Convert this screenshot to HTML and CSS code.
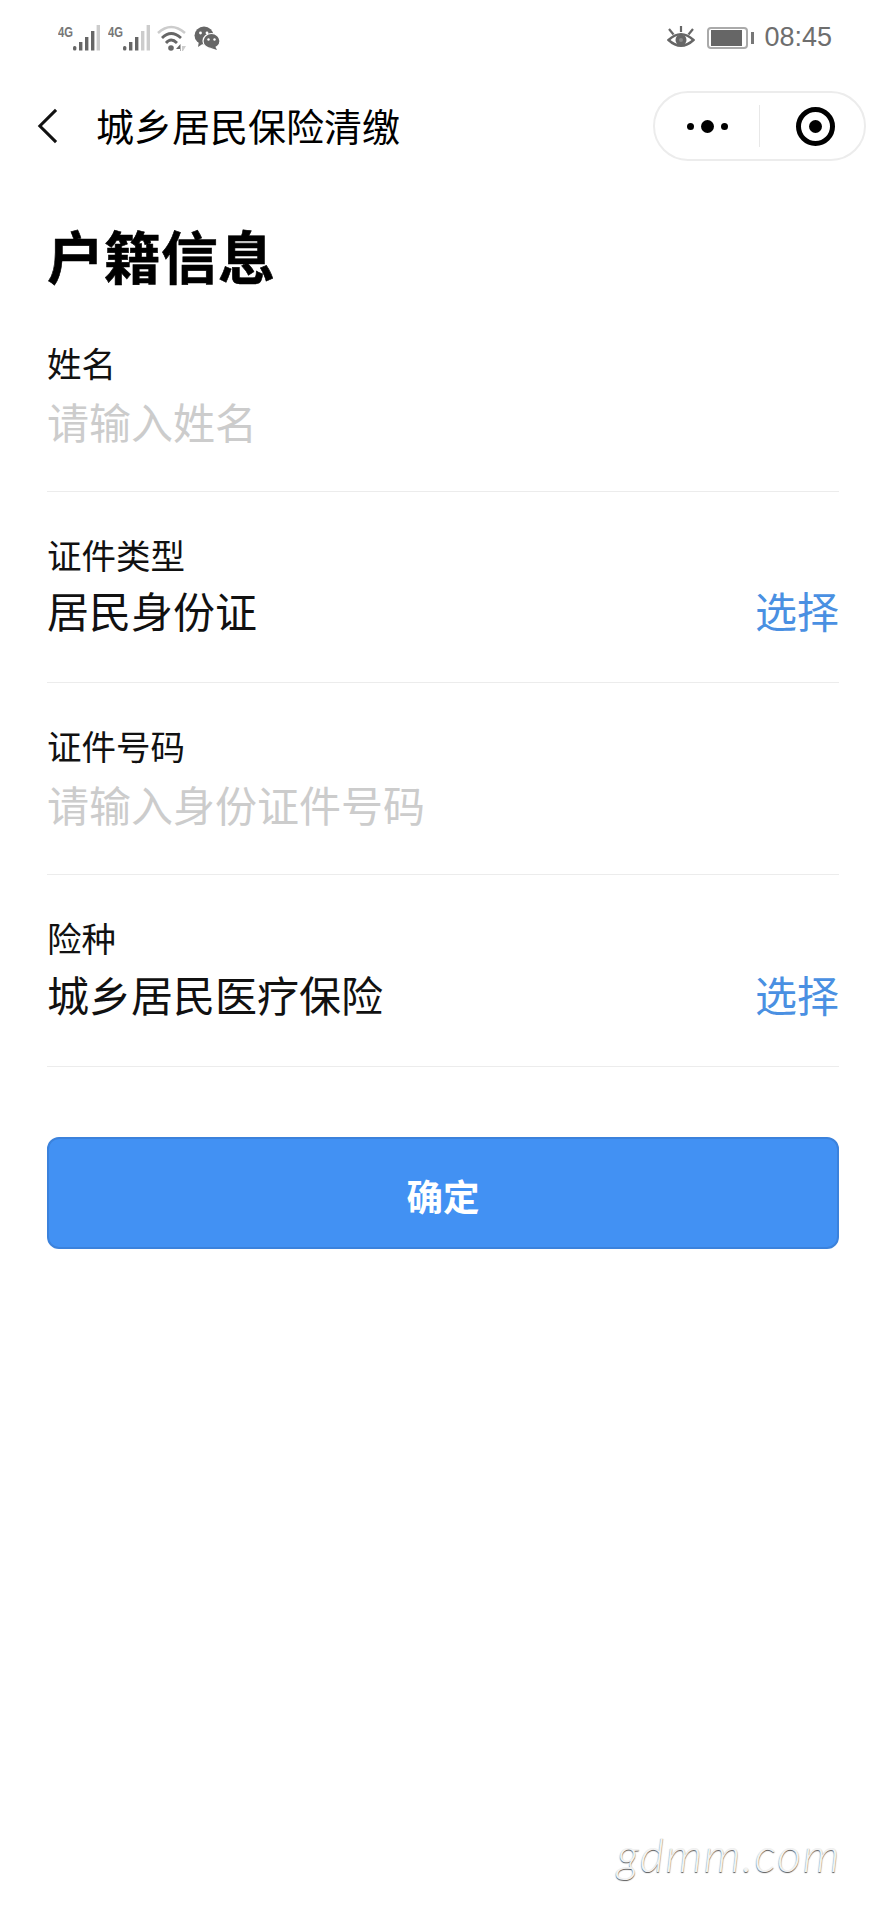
FILE: index.html
```html
<!DOCTYPE html>
<html lang="zh-CN">
<head>
    <meta charset="UTF-8">
    <meta name="viewport" content="width=device-width, initial-scale=1.0">
    <title>城乡居民保险清缴</title>
    <link rel="stylesheet" href="styles.css">
</head>
<body>
    <!-- Status bar -->
    <div class="statusbar">
        <div class="status-left">
            <svg class="signal" viewBox="0 0 42 28">
                <text x="0" y="13" class="net" textLength="15" lengthAdjust="spacingAndGlyphs">4G</text>
                <rect x="15" y="22" width="3.4" height="4.5" rx="1.5" fill="#666"/>
                <rect x="21" y="18" width="3.4" height="8.5" fill="#666"/>
                <rect x="27" y="13" width="3.4" height="13.5" fill="#666"/>
                <rect x="33" y="7" width="3.4" height="19.5" fill="#666"/>
                <rect x="38.6" y="1" width="3.4" height="25.5" fill="#ccc"/>
            </svg>
            <svg class="signal signal-2" viewBox="0 0 42 28">
                <text x="0" y="13" class="net" textLength="15" lengthAdjust="spacingAndGlyphs">4G</text>
                <rect x="15" y="22" width="3.4" height="4.5" rx="1.5" fill="#666"/>
                <rect x="21" y="18" width="3.4" height="8.5" fill="#666"/>
                <rect x="27" y="13" width="3.4" height="13.5" fill="#666"/>
                <rect x="33" y="7" width="3.4" height="19.5" fill="#ccc"/>
                <rect x="38.6" y="1" width="3.4" height="25.5" fill="#ccc"/>
            </svg>
            <svg class="wifi" viewBox="0 0 30 28">
                <path d="M1 9 Q14 -3 28 9" fill="none" stroke="#ccc" stroke-width="2.5"/>
                <path d="M5 14 Q14 5 24 14" fill="none" stroke="#666" stroke-width="2.8"/>
                <path d="M9 19 Q14 13 20 19" fill="none" stroke="#666" stroke-width="2.8"/>
                <circle cx="14" cy="24" r="2.8" fill="#666"/>
                <path d="M19 25 L23.5 20 V27 H23 V25 Z" fill="#666"/>
                <path d="M25 22 L29 22 L26 27 H25 Z" fill="#ccc"/>
            </svg>
            <svg class="wechat" viewBox="0 0 26 24">
                <ellipse cx="10" cy="9.5" rx="9.5" ry="9" fill="#666"/>
                <path d="M5 15 L4 21 L10 17 Z" fill="#666"/>
                <ellipse cx="17.5" cy="15" rx="8.5" ry="7.5" fill="#666" stroke="#fff" stroke-width="1.2"/>
                <path d="M21 20 L23 24 L17 22 Z" fill="#666"/>
                <circle cx="6.5" cy="7" r="1.4" fill="#fff"/>
                <circle cx="13" cy="7" r="1.4" fill="#fff"/>
                <circle cx="14.5" cy="13.5" r="1.2" fill="#fff"/>
                <circle cx="20.5" cy="13.5" r="1.2" fill="#fff"/>
            </svg>
        </div>
        <div class="status-right">
            <svg class="eye" viewBox="0 0 28 24">
                <path d="M1.5 14 Q14 2.5 26.5 14 Q14 25.5 1.5 14 Z" fill="none" stroke="#666" stroke-width="2.4"/>
                <circle cx="14" cy="14" r="5.5" fill="#666"/>
                <circle cx="14" cy="14" r="2" fill="#8a8a8a"/>
                <path d="M2 3 L6.5 8.5 M14 0 V6 M26 3 L21.5 8.5" stroke="#666" stroke-width="2.2"/>
            </svg>
            <div class="battery"><span class="battery-level"></span></div>
            <span class="battery-tip"></span>
            <span class="clock">08:45</span>
        </div>
    </div>

    <!-- Navigation -->
    <nav class="navbar">
        <svg class="back" viewBox="0 0 24 40">
            <path d="M21 3 L4 20 L21 37" fill="none" stroke="#111" stroke-width="3.2"/>
        </svg>
        <span class="nav-title">城乡居民保险清缴</span>
        <div class="capsule">
            <div class="capsule-part capsule-left">
                <span class="dot"></span>
                <span class="dot dot-big"></span>
                <span class="dot"></span>
            </div>
            <span class="capsule-line"></span>
            <div class="capsule-part capsule-right">
                <span class="target"><span class="target-core"></span></span>
            </div>
        </div>
    </nav>

    <!-- Form -->
    <main class="content">
        <h1 class="page-title">户籍信息</h1>

        <div class="field">
            <div class="field-label">姓名</div>
            <div class="field-value placeholder">请输入姓名</div>
        </div>
        <div class="field">
            <div class="field-label">证件类型</div>
            <div class="field-row">
                <div class="field-value">居民身份证</div>
                <a class="field-value field-action">选择</a>
            </div>
        </div>
        <div class="field">
            <div class="field-label">证件号码</div>
            <div class="field-value placeholder">请输入身份证件号码</div>
        </div>
        <div class="field">
            <div class="field-label">险种</div>
            <div class="field-row">
                <div class="field-value">城乡居民医疗保险</div>
                <a class="field-value field-action">选择</a>
            </div>
        </div>

        <button class="submit" type="button">确定</button>
    </main>

    <div class="watermark">gdmm.com</div>
</body>
</html>
```

FILE: styles.css
```css
body {
    margin: 0;
    width: 886px;
    height: 1920px;
    position: relative;
    overflow: hidden;
    background-color: #fff;
    color: #000;
    font-family: "Noto Sans CJK SC", "Liberation Sans", sans-serif;
}

/* Status bar */
.statusbar {
    height: 75px;
    display: flex;
    justify-content: space-between;
    align-items: center;
    padding: 0 54px 0 58px;
}
.status-left, .status-right {
    display: flex;
    align-items: center;
}
.signal {
    width: 42px;
    height: 28px;
}
.signal-2 {
    margin-left: 8px;
}
.net {
    font-family: "Liberation Sans", sans-serif;
    font-size: 15.5px;
    font-weight: bold;
    fill: #777;
}
.wifi {
    width: 30px;
    height: 28px;
    margin-left: 7px;
}
.wechat {
    width: 26px;
    height: 24px;
    margin-left: 7px;
}
.eye {
    width: 28px;
    height: 24px;
    margin-right: 12px;
}
.battery {
    width: 41px;
    height: 22px;
    box-sizing: border-box;
    border: 2px solid #aaa;
    border-radius: 4px;
    padding: 1px 2px;
}
.battery-level {
    display: block;
    width: 31px;
    height: 16px;
    background-color: #666;
}
.battery-tip {
    width: 3px;
    height: 12px;
    margin-left: 3px;
    background-color: #777;
}
.clock {
    margin-left: 10px;
    font-family: "Liberation Sans", sans-serif;
    font-size: 27px;
    color: #6e6e6e;
}

/* Navigation */
.navbar {
    height: 76px;
    margin-top: 13px;
    display: flex;
    align-items: center;
    padding: 0 20px 0 36px;
}
.back {
    width: 23px;
    height: 38px;
}
.nav-title {
    margin-left: 37px;
    padding-bottom: 3px;
    font-size: 38px;
    flex: 1;
}
.capsule {
    width: 213px;
    height: 70px;
    box-sizing: border-box;
    border: 2px solid #ececec;
    border-radius: 35px;
    display: flex;
    align-items: center;
}
.capsule-part {
    display: flex;
    align-items: center;
    justify-content: center;
    gap: 7px;
}
.capsule-left {
    width: 104px;
}
.capsule-right {
    flex: 1;
    padding-left: 6px;
}
.capsule-line {
    width: 1px;
    height: 42px;
    background-color: #e8e8e8;
}
.dot {
    width: 7px;
    height: 7px;
    border-radius: 50%;
    background-color: #000;
}
.dot-big {
    width: 13px;
    height: 13px;
}
.target {
    width: 39px;
    height: 39px;
    box-sizing: border-box;
    border: 5px solid #000;
    border-radius: 50%;
    display: flex;
    align-items: center;
    justify-content: center;
}
.target-core {
    width: 13px;
    height: 13px;
    border-radius: 50%;
    background-color: #000;
}

/* Form */
.content {
    padding: 0 47px;
}
.page-title {
    margin: 0;
    padding-top: 57px;
    font-size: 57px;
    line-height: 66px;
    height: 79px;
    font-weight: 700;
    -webkit-text-stroke: 0.6px #000;
}
.field {
    height: 190.7px;
    border-bottom: 1px solid #ececec;
}
.field-label {
    font-size: 34.5px;
    line-height: 46px;
    padding-top: 39px;
    color: #111;
}
.field-value {
    font-size: 42px;
    line-height: 60px;
    margin-top: 3.5px;
    color: #111;
}
.field-row {
    display: flex;
    justify-content: space-between;
}
.placeholder {
    margin-top: 6px;
    color: #ccc;
}
.field-action {
    color: #4a90e2;
}
.submit {
    display: block;
    width: 100%;
    height: 112px;
    margin-top: 70px;
    padding: 6px 0 0;
    background-color: #4291f3;
    border: 2px solid #3b82dc;
    border-radius: 12px;
    color: #fff;
    font-family: inherit;
    font-size: 36.5px;
    font-weight: bold;
}

/* Watermark over the page corner */
.watermark {
    position: absolute;
    right: 45px;
    top: 1826px;
    font-family: "Lato", "Liberation Sans", sans-serif;
    font-size: 47px;
    font-style: italic;
    font-weight: 300;
    letter-spacing: 1.6px;
    color: #f2f2f2;
    text-shadow: 0 1px 1px #555;
}
```
